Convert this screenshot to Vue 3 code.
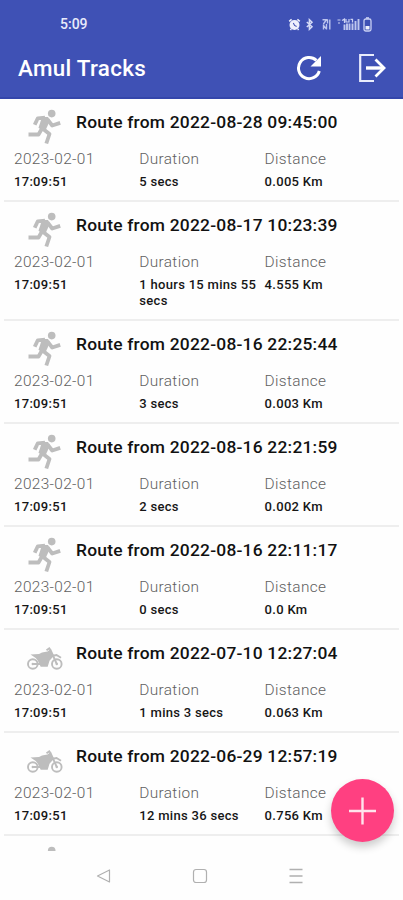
<template>
  <div class="screen">
    <header class="header">
      <div class="status-bar">
        <span class="clock">5:09</span>
        <div class="status-icons">
          <svg class="alarm" width="13" height="13" viewBox="0 0 13 13">
            <circle cx="6.5" cy="7" r="5" fill="#eef0fc" />
            <path d="M1.2 3.4 3.6 1.4M11.8 3.4 9.4 1.4M3.2 11 2.4 12M9.8 11l.8 1" stroke="#eef0fc" stroke-width="1.6" />
            <path d="M5.3 5l1.3 2.4 2 1" fill="none" stroke="#4452b5" stroke-width="1.1" />
          </svg>
          <svg class="bluetooth" width="9" height="13" viewBox="0 0 9 13">
            <path d="M1.8 4 7 8.8 4.4 11.3V1.7L7 4.2 1.8 9" fill="none" stroke="#d5daf6" stroke-width="1.5" />
          </svg>
          <svg class="vibrate" width="9" height="13" viewBox="0 0 9 13">
            <path d="M.5 1.7h4L1.4 6M5.5 1.5v4M7.8 1.5v10M1.5 6.5v5M4.5 6v5.5M1.5 7.5l3 3.5" fill="none" stroke="#bcc4ee" stroke-width="1.4" />
          </svg>
          <svg class="signal" width="23" height="13" viewBox="0 0 23 13">
            <path d="M.5 2h3M1 5h2M5 2.5 7.5 1v4M9 1v3h3V1M13.5 1.3h2v3.2" fill="none" stroke="#ccd2f3" stroke-width="1.2" />
            <path d="M7.5 6.5V12M10 5.5V12M12.5 5.5V12M15.5 5.5V12M18.5 3v9M21.5 1v11" stroke="#bfc7ef" stroke-width="1.9" />
          </svg>
          <svg class="battery" width="9" height="15" viewBox="0 0 9 15">
            <path d="M3 1h3" stroke="#d5daf6" stroke-width="1.5" />
            <rect x="1" y="2" width="7" height="12" rx="1.8" fill="none" stroke="#c9d0f4" stroke-width="1.3" />
            <path d="M2.5 9h4v3.5h-4z" fill="#eef0fc" />
          </svg>
        </div>
      </div>
      <div class="toolbar">
        <h1 class="title">Amul Tracks</h1>
        <svg class="refresh" width="26" height="26" viewBox="0 0 26 26">
          <path d="M23.3 16A10.6 10.6 0 1 1 20.4 5.4" fill="none" stroke="#fff" stroke-width="3" />
          <path d="M25 1v10.5H14.5z" fill="#fff" />
        </svg>
        <svg class="logout" width="28" height="30" viewBox="0 0 28 30">
          <path d="M16 2H2.2v26H16" fill="none" stroke="#e9ecfc" stroke-width="2.2" />
          <path d="M8 15h17" stroke="#fff" stroke-width="3.4" />
          <path d="M17.5 6.5 26 15l-8.5 8.5" fill="none" stroke="#fff" stroke-width="2.8" />
        </svg>
      </div>
    </header>

    <main class="list">
      <article v-for="(route, i) in routes" :key="i" class="route">
        <div class="route-head">
          <svg v-if="route.type === 'run'" class="icon" width="50" height="36" viewBox="0 0 50 36">
            <circle cx="31.7" cy="4.6" r="3.8" fill="#bdbdbd" />
            <path d="M14.7 15.8 17.8 9.3 25 8.7M27.5 10.3l4.7 6.2 8-2.6M8.5 25.5h10l3.5-6M22.5 19.5l7 5.500-3.200 9.500" fill="none" stroke="#bdbdbd" stroke-width="3.8" stroke-linejoin="round" />
            <path d="M22 8h6l2 3.500-4 8.700-3.500 1.500-4-3z" fill="#bdbdbd" />
          </svg>
          <svg v-else class="icon" width="50" height="36" viewBox="0 0 50 36">
            <g fill="none" stroke="#bdbdbd">
              <circle cx="12.800" cy="24" r="4.800" stroke-width="1.900" />
              <circle cx="36.800" cy="24" r="4.800" stroke-width="1.900" />
              <path d="M13 24h9M36.800 24 30 9M26.500 10.200l3.500-2.400M31.500 16l5-1 4.500 2.800" stroke-width="1.900" />
            </g>
            <path d="M10.500 14.500l8.500-.5 3-1.500 5.500-1L30 9.500l2.300 4 .7 3.300-3.500 4-1.800 6h-7l-3-6.300-2-2.500z" fill="#bdbdbd" />
            <circle cx="12.800" cy="24" r="1.200" fill="#bdbdbd" />
            <circle cx="36.800" cy="24" r="1.200" fill="#bdbdbd" />
          </svg>
          <h2 v-if="route.date" class="route-title">Route from {{ route.date }}</h2>
        </div>
        <div v-if="route.date" class="stats">
          <div class="stat">
            <span class="label">2023-02-01</span>
            <span class="value">17:09:51</span>
          </div>
          <div class="stat">
            <span class="label">Duration</span>
            <span class="value">{{ route.duration }}</span>
          </div>
          <div class="stat">
            <span class="label">Distance</span>
            <span class="value">{{ route.distance }} Km</span>
          </div>
        </div>
      </article>
    </main>

    <button class="fab" aria-label="Add">
      <svg width="28" height="28" viewBox="0 0 28 28">
        <path d="M13.5 .5v27M0 14h27" stroke="#ffe3ec" stroke-width="2.4" />
      </svg>
    </button>

    <nav class="nav-bar">
      <svg width="16" height="16" viewBox="0 0 16 16">
        <path d="M13.5 2v12L1.5 8z" fill="none" stroke="#b0b0b0" stroke-width="1.2" stroke-linejoin="round" />
      </svg>
      <svg width="16" height="16" viewBox="0 0 16 16">
        <rect x="1.5" y="1.5" width="13" height="13" rx="2.5" fill="none" stroke="#b0b0b0" stroke-width="1.2" />
      </svg>
      <svg width="16" height="16" viewBox="0 0 16 16">
        <path d="M1.5 1.5h13M1.5 8h13M1.5 14.5h13" stroke="#b0b0b0" stroke-width="1.3" />
      </svg>
    </nav>
  </div>
</template>

<script setup>
const routes = [
  { type: 'run', date: '2022-08-28 09:45:00', duration: '5 secs', distance: '0.005' },
  { type: 'run', date: '2022-08-17 10:23:39', duration: '1 hours 15 mins 55 secs', distance: '4.555' },
  { type: 'run', date: '2022-08-16 22:25:44', duration: '3 secs', distance: '0.003' },
  { type: 'run', date: '2022-08-16 22:21:59', duration: '2 secs', distance: '0.002' },
  { type: 'run', date: '2022-08-16 22:11:17', duration: '0 secs', distance: '0.0' },
  { type: 'moto', date: '2022-07-10 12:27:04', duration: '1 mins 3 secs', distance: '0.063' },
  { type: 'moto', date: '2022-06-29 12:57:19', duration: '12 mins 36 secs', distance: '0.756' },
  // next row, only its top edge is above the fold
  { type: 'run' }
]
</script>

<style>
body {
  margin: 0;
  background: #fff;
}
</style>

<style scoped>
.screen {
  position: relative;
  display: flex;
  flex-direction: column;
  width: 403px;
  height: 900px;
  overflow: hidden;
  background: #fefefe;
  font-family: Roboto, sans-serif;
}

.header {
  flex: none;
  box-sizing: border-box;
  height: 99px;
  background: #3f51b5;
  border-bottom: 2px solid #3446ab;
  color: #fff;
}

.status-bar {
  display: flex;
  align-items: center;
  height: 38px;
  padding: 10px 31px 0 60px;
  box-sizing: border-box;
}

.clock {
  flex: 1;
  font-size: 14px;
  font-weight: 500;
  color: #e8ebfb;
}

.status-icons {
  display: flex;
  align-items: center;
}

.bluetooth {
  margin-left: 4px;
}

.vibrate {
  margin-left: 8px;
}

.signal {
  margin-left: 6px;
}

.battery {
  margin-left: 3px;
}

.toolbar {
  display: flex;
  align-items: center;
  height: 60px;
  padding: 0 17px 0 18px;
}

.title {
  flex: 1;
  margin: 0;
  font-size: 22.4px;
  font-weight: 500;
  letter-spacing: 0.3px;
}

.refresh {
  margin-top: -1px;
}

.logout {
  margin-left: 36px;
}

.list {
  flex: none;
  height: 752px;
  overflow: hidden;
}

.route {
  box-sizing: border-box;
  min-height: 103px;
  margin: 0 4px;
  padding: 10px 0 10px 10px;
  border-bottom: 2px solid #eee;
}

.route-head {
  display: flex;
  height: 36px;
  margin-bottom: 4px;
}

.icon {
  flex: none;
  margin-left: 6px;
}

.route-title {
  margin: 0 0 0 6px;
  font-size: 17.4px;
  line-height: 27px;
  font-weight: 500;
  white-space: nowrap;
  letter-spacing: 0.22px;
  color: #111;
}

.stats {
  display: flex;
}

.stat {
  display: flex;
  flex-direction: column;
  width: 125.3px;
}

.label {
  font-size: 15.4px;
  line-height: 20px;
  margin-bottom: 5px;
  font-weight: 300;
  letter-spacing: 0.35px;
  color: #606060;
}

.value {
  font-size: 13px;
  line-height: 16px;
  font-weight: 500;
  letter-spacing: 0.3px;
  color: #161616;
}

.fab {
  position: absolute;
  right: 9px;
  bottom: 58px;
  display: flex;
  align-items: center;
  justify-content: center;
  width: 63px;
  height: 63px;
  padding: 0;
  border: none;
  border-radius: 50%;
  background: #ff4081;
  box-shadow: 0 5px 8px rgba(0, 0, 0, 0.2);
}

.nav-bar {
  display: flex;
  flex: 1;
  align-items: center;
  justify-content: center;
  gap: 80px;
  padding-right: 4px;
}
</style>
